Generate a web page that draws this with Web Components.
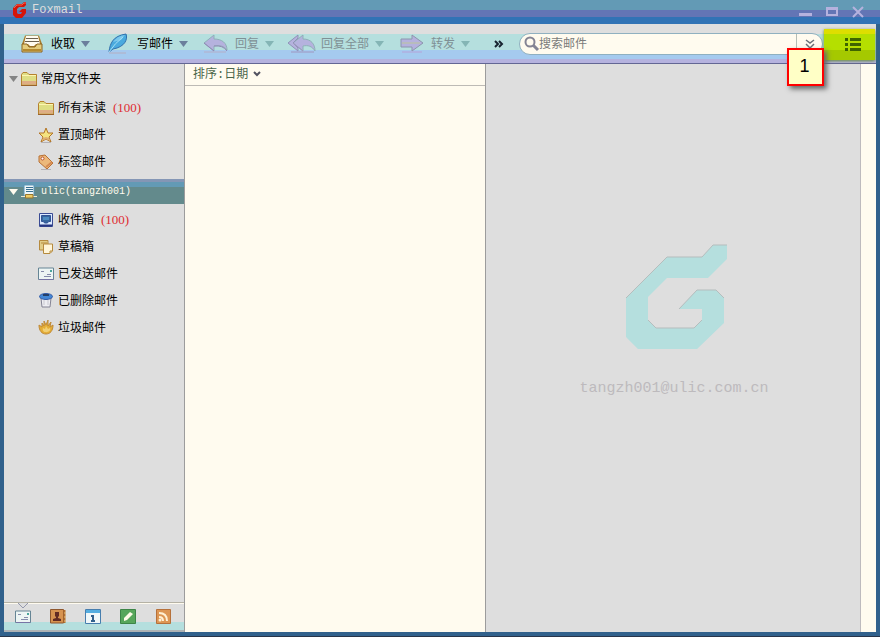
<!DOCTYPE html>
<html lang="zh-CN">
<head>
<meta charset="utf-8">
<title>Foxmail</title>
<style>
html,body{height:100%;margin:0}
body{font:12px/16px "Liberation Mono","Noto Sans CJK SC",monospace;color:#000;overflow:hidden}
</style>
</head>
<body>
<fox-window></fox-window>
<script>
const ICONS = {
fox:[16,16,'<path d="M1 6 5 2H10L12 0H14V3L12 5H7L5 7V11L6 12H9L10 10H7L10 7H14V11L10 16H4L1 13Z" fill="#d61408"/><path d="M2 6 5 3H10L12 1H14" fill="none" stroke="#f0604c"/>'],
inbox:[22,20,'<path d="M4 1.500H18L21 10V18H1V10Z" fill="#a87b2a"/><path d="M5 2H17L19 10H3Z" fill="#fffbef"/><path d="M5 4.500H17M4 7.500H18" stroke="#6b6050"/><path d="M1 10H6L8 13H14L16 10H21V18H1Z" fill="#e4cc7c" stroke="#8c6520"/><path d="M7 10H15L13 12H9Z" fill="#fffbef"/><path d="M2 16H20" stroke="#b58a30" stroke-width="2"/>'],
feather:[20,21,'<path d="M1 19C2 10 5 3 18 1C20 6 17 14 5 16Z" fill="#4aaade" stroke="#3170ad"/><path d="M5 9Q9 3 17 2L13 7Z" fill="#7bc8ec"/><path d="M1 19Q7 10 15 4" fill="none" stroke="#a5dff5"/><path d="M1 20H18" stroke="#b5aec0"/>'],
reply:[24,20,'<path d="M0 9 10 1V5C18 5 23 9 23 16C20 12 16 11 10 12V17Z" fill="#b5b2de" stroke="#8fb1b8"/><path d="M10 12Q19 11 23 17M0 9 10 17" fill="none" stroke="#9387b7"/><path d="M0 18H22" stroke="#b5aec8"/>'],
replyall:[28,20,'<path d="M5 9 15 1V5C23 5 27 10 27 17C24 12 20 11 15 12V17Z" fill="#b5b2de" stroke="#8fb1b8"/><path d="M0 9 10 1V4L5 9 10 14V17Z" fill="#b5b2de" stroke="#8f93b7"/><path d="M5 9 15 17M3 18H26" fill="none" stroke="#9f96c0"/>'],
forward:[24,20,'<path d="M1 5H12V1L23 9 12 17V13H1Z" fill="#b5b2de" stroke="#8c96ad"/><path d="M2 9H20" stroke="#b8bcbc" stroke-width="2"/><path d="M2 18H22" stroke="#b5a2d8"/>'],
caret:[9,6,'<path d="M0 0H9L4.500 6Z" fill="currentColor"/>'],
search:[15,15,'<circle cx="6" cy="6" r="4.500" fill="none" stroke="#848494" stroke-width="2"/><path d="M9 9 14 14" stroke="#848494" stroke-width="3"/>'],
more:[10,8,'<path d="M1 1 4 4 1 7M5 1 8 4 5 7" fill="none" stroke="#182430" stroke-width="2"/>'],
down2:[10,10,'<path d="M1 1 5 4 9 1M1 5 5 9 9 5" fill="none" stroke="#6b7078" stroke-width="1.500"/>'],
chev:[8,6,'<path d="M1 1 4 4 7 1" fill="none" stroke="#525260" stroke-width="2"/>'],
list:[17,14,'<path d="M0 1.500H3M5 1.500H16M0 6.500H3M5 6.500H16M0 11.500H3M5 11.500H16" stroke="#3e6500" stroke-width="3"/>'],
folder:[16,14,'<path d="M.5 2.500V13H15.500V2.500H8L6 .5H2Z" fill="#dede84" stroke="#b5822e"/><path d="M1 3.500H15" stroke="#fff5b0"/><path d="M1 9H15V12.500H1Z" fill="#dead84"/><path d="M0 13.500H16" stroke="#9b632b"/>'],
star:[16,16,'<path d="M8 1 10 6H15L11 10 13 15 8 12 3 15 5 10 1 6H6Z" fill="#f4e37f" stroke="#b37526"/><path d="M5 11 8 10 11 11 12 14 8 12 4 14Z" fill="#dead73"/><path d="M3 15.500H13" stroke="#b5b2b5"/>'],
tag:[16,16,'<path d="M1 2 7 1 15 9 9 15 1 8Z" fill="#ecb87a" stroke="#b87135"/><circle cx="4.500" cy="4.500" r="1.500" fill="#fff" stroke="#b84f2c"/><path d="M8 13 14 8" stroke="#d58a52" stroke-width="2"/><path d="M3 15.500H13" stroke="#b5b2b5"/>'],
account:[16,14,'<path d="M3 0H13V11H3Z" fill="#eef6f8" stroke="#5b93b5"/><path d="M5 2.500H12M5 4.500H12M5 6.500H12" stroke="#397092"/><path d="M0 11.500H16" stroke="#f1ead3"/><path d="M4.500 9.500H12V13H4.500Z" fill="#edcb66" stroke="#98752c"/>'],
received:[14,14,'<path d="M.5.500H13.500V13.500H.500Z" fill="#dceaff" stroke="#3a4b93"/><path d="M2.500 2.500H11.500V8.500H9.500L8.500 10H5.500L4.500 8.500H2.500Z" fill="#37669d" stroke="#315395"/><path d="M4 4H10V7H4Z" fill="#4d8bc0"/><path d="M1 12.500H13" stroke="#273682" stroke-width="2"/>'],
drafts:[14,14,'<path d="M.5.500H9V10H.500Z" fill="#e1cc86" stroke="#b58a3e"/><path d="M4.500 4H13.500V11L11 13.500H4.500Z" fill="#fff5d8" stroke="#b58a3e"/><path d="M13 11H11V13M2 3H8" fill="none" stroke="#b58a3e"/>'],
mail:[16,14,'<path d="M.5 1H15.500V12.500H.500Z" fill="#edf5f4" stroke="#668595"/><path d="M3 4.500H6M9 7.500H13M6 9.500H13" stroke="#858cab"/><path d="M12 3H14V5H12Z" fill="#4aa49b"/><path d="M1 12.500H15.500" stroke="#7775a5"/>'],
bin:[14,15,'<path d="M2 5H12L11 14H3Z" fill="#eeeef2" stroke="#848494"/><path d="M5 7V12M9 7V12" stroke="#c8c8d0"/><ellipse cx="7" cy="3.500" rx="6.500" ry="3" fill="#4387d5" stroke="#315aa8"/><path d="M4 2H10" stroke="#263f68" stroke-width="2"/>'],
fire:[14,15,'<path d="M3 3 5 6V1L7 5 9 0V6L12 2 11 7 14 5C14 11 11 14 7 14S0 11 0 5L3 7Z" fill="#e4ad35" stroke="#c08a38"/><path d="M4 8 6 9 7 6 9 9 11 8C13 13 2 14 4 8Z" fill="#f1cf74"/>'],
contacts:[16,15,'<path d="M.5.500H13.500V14H.500Z" fill="#d79350" stroke="#8e572e"/><path d="M14.500 1V14" stroke="#b46f2e" stroke-width="2"/><path d="M5 3H9V7L8 8V9L11 10V12H3V10L6 9V8L5 7Z" fill="#632c23"/><path d="M14 4H16M14 8H16M14 12H16" stroke="#e4c280"/>'],
calendar:[16,15,'<path d="M.5.500H15.500V14.500H.500Z" fill="#eff7f9" stroke="#477eae"/><path d="M1 1H15V4H1Z" fill="#53ade0"/><path d="M6 7H8V12M6 12H10" fill="none" stroke="#31608c" stroke-width="2"/>'],
note:[16,15,'<path d="M.5.500H15.500V14.500H.500Z" fill="#57a65b" stroke="#3d8547"/><path d="M4 9 10 3 13 5 7 11 4 12Z" fill="#fffbe8"/>'],
rss:[15,15,'<path d="M.5.500H14.500V14.500H.500Z" fill="#dd9654" stroke="#b6713b"/><path d="M3 4Q11 4 11 12M3 8Q7 8 7 12" fill="none" stroke="#fff1d4" stroke-width="2"/><circle cx="4" cy="11" r="1.500" fill="#fff1d4"/>'],
min:[13,10,'<path d="M0 7.500H13" stroke="#b5b2de" stroke-width="3"/>'],
max:[12,10,'<path d="M1 1.500H11V8H1Z" fill="none" stroke="#b5b2de" stroke-width="2"/><path d="M0 1.500H12" stroke="#b5b2de" stroke-width="3"/>'],
close:[12,12,'<path d="M1 1 11 11M11 1 1 11" stroke="#b5b2de" stroke-width="2"/>'],
notch:[12,7,'<path d="M1 0 6 5 11 0" fill="#dedede" stroke="#9498ad"/>'],
logo:[102,106,'<path d="M0 54 41 13H76L87 1H101V15L82 34H41L22 53V76L30 84H68L76 76V65H53L71 46H90L98 54V79L71 105H12L0 93Z" fill="#b5dfde"/><path d="M0 54 41 13H76L87 1H101M53 65 71 46H90L98 54M22 76 30 84H68L76 76" fill="none" stroke="#b5bdbd"/>']
};
const BTN='button{appearance:none;border:0;padding:0;margin:0;background:none;font:inherit;color:inherit;text-align:left}button:focus-visible{outline:1px dotted #31608c}';
function define(name, css, html){
  const t=document.createElement('template');
  t.innerHTML=`<style>*{box-sizing:border-box}${BTN}${css}</style>${html}`;
  customElements.define(name,class extends HTMLElement{
    constructor(){super();this.attachShadow({mode:'open'}).append(t.content.cloneNode(true));}
  });
}
/* Elements whose markup depends on their attributes render once, when connected. */
function defineDynamic(name, render){
  customElements.define(name,class extends HTMLElement{
    connectedCallback(){
      if(this.shadowRoot)return;
      this.attachShadow({mode:'open'}).innerHTML=`<style>*{box-sizing:border-box}${BTN}</style>${render(this)}`;
    }
  });
}
defineDynamic('fox-icon',h=>{
  const [w,y,p]=ICONS[h.getAttribute('name')];
  return `<style>:host{display:inline-flex;flex:none;align-items:center;justify-content:center}svg{display:block;flex:none;overflow:visible}</style><svg aria-hidden="true" width="${w}" height="${y}" viewBox="0 0 ${w} ${y}">${p}</svg>`;
});
defineDynamic('fox-tool',h=>`<style>:host{display:block;flex:none;--caret:#6b7f9c}:host([off]){color:#7f9095;--caret:#84b5b5}
button{display:flex;align-items:center;white-space:nowrap}.i{width:24px;margin-right:7px}.c{color:var(--caret);margin-left:6px}.t{padding-top:2px}</style>
<button><fox-icon class="i" name="${h.getAttribute('icon')}"></fox-icon><span class="t"><slot></slot></span><fox-icon class="c" name="caret"></fox-icon></button>`);
defineDynamic('fox-row',h=>`<style>
:host{display:block}button{display:flex;width:100%;height:27px;align-items:center;padding-left:34px;white-space:nowrap}
:host([group]) button{height:30px;padding-left:5px}
:host([selected]) button{height:25px;color:#fffbef;background:linear-gradient(#8496b5 0 3px,#639ab5 3px 8px,#638a8c 8px)}
.c{color:#848484;margin-right:3px}:host([selected]) .c{color:#fffbef}
.i{width:16px;margin-right:4px}.t{padding-top:2px}
.n{font:13px/16px "Liberation Serif",serif;color:#de2c31;margin-left:7px}:host([selected]) .t{font-size:10px;padding:0}</style>
<button>${h.hasAttribute('group')?'<fox-icon class="c" name="caret"></fox-icon>':''}<fox-icon class="i" name="${h.getAttribute('icon')}"></fox-icon><span class="t"><slot></slot></span>${h.hasAttribute('count')?`<span class="n">(${h.getAttribute('count')})</span>`:''}</button>`);
define('fox-title',`:host{display:flex;flex:none;height:24px;padding:0 16px 4px 12px;align-items:center;gap:4px;color:#dedede;background:linear-gradient(#639ab5 0 10px,#6375b5 10px 17px,#3173b5 17px)}
nav{display:flex;gap:14px;margin-left:auto;align-items:center;padding-top:4px}button{display:flex;align-items:center;height:16px}`,
`<fox-icon name="fox"></fox-icon><span>Foxmail</span><nav><button aria-label="最小化"><fox-icon name="min"></fox-icon></button><button aria-label="最大化"><fox-icon name="max"></fox-icon></button><button aria-label="关闭"><fox-icon name="close"></fox-icon></button></nav>`);
define('fox-search',`:host{display:flex;flex:1;min-width:0;height:22px;border:1px solid #8fb0c0;border-radius:11px;background:#fffbef;overflow:hidden;align-items:center}
label{display:flex;flex:1;align-items:center;padding-left:4px;min-width:0}
input{flex:1;min-width:0;border:0;outline:0;padding:2px 0 0;background:none;font:inherit;color:#000}input::placeholder{color:#7b7b7b;opacity:1}
button{width:26px;height:20px;border-left:1px solid #b5bdb5;display:flex;align-items:center;justify-content:center}`,
`<label><fox-icon name="search"></fox-icon><input aria-label="搜索邮件" placeholder="搜索邮件"></label><button aria-label="搜索选项"><fox-icon name="down2"></fox-icon></button>`);
define('fox-toolbar',`:host{display:flex;flex:none;position:relative;height:40px;align-items:center;padding:0 1px 0 16px;gap:16px;border-bottom:1px solid #636694;background:linear-gradient(#dedede 0 10px,#b5dfde 10px 26px,#a5caef 26px 35px,#b5b2de 35px)}
.more{display:flex;margin:0 -1px 0 8px}.view{width:51px;height:31px;margin:2px 0 0 -15px;display:flex;align-items:center;justify-content:center;padding-left:8px;background:linear-gradient(#dede00 0 5px,#b5df00 5px 21px,#a5c900 21px);box-shadow:0 1px 3px #638a31}
.tip{position:absolute;right:52px;top:24px;width:37px;height:38px;border:2px solid #f00;background:#ffffc6;box-shadow:3px 3px 5px #666;font:18px/32px "Liberation Sans",sans-serif;text-align:center;padding-right:2px;z-index:2}`,
`<fox-tool icon="inbox">收取</fox-tool><fox-tool icon="feather">写邮件</fox-tool><fox-tool icon="reply" off>回复</fox-tool><fox-tool icon="replyall" off>回复全部</fox-tool><fox-tool icon="forward" off>转发</fox-tool><button class="more" aria-label="更多"><fox-icon name="more"></fox-icon></button><fox-search></fox-search><button class="view" aria-label="菜单"><fox-icon name="list"></fox-icon></button><span class="tip">1</span>`);
define('fox-sidebar',`:host{display:flex;flex-direction:column;flex:none;width:181px;background:#dedede;border-right:1px solid #9c9c9c}
.set{padding-bottom:4px}.set+fox-row+.set{padding-top:2px}
footer{position:relative;margin-top:auto;height:30px;display:flex;align-items:center;padding-left:10px;gap:17px;border-top:1px solid #b5b2a5;border-bottom:2px solid #adb2b5;background:linear-gradient(#fffbef 0 1px,#dedede 1px 19px,#b5dfde 19px)}
footer button{width:18px;height:18px;display:flex;align-items:center;justify-content:center}.notch{position:absolute;left:13px;top:0}`,
`<div class="set"><fox-row group icon="folder">常用文件夹</fox-row><fox-row icon="folder" count="100">所有未读</fox-row><fox-row icon="star">置顶邮件</fox-row><fox-row icon="tag">标签邮件</fox-row></div>
<fox-row group selected icon="account">ulic(tangzh001)</fox-row>
<div class="set"><fox-row icon="received" count="100">收件箱</fox-row><fox-row icon="drafts">草稿箱</fox-row><fox-row icon="mail">已发送邮件</fox-row><fox-row icon="bin">已删除邮件</fox-row><fox-row icon="fire">垃圾邮件</fox-row></div>
<footer><fox-icon class="notch" name="notch"></fox-icon><button aria-label="邮件"><fox-icon name="mail"></fox-icon></button><button aria-label="联系人"><fox-icon name="contacts"></fox-icon></button><button aria-label="日历"><fox-icon name="calendar"></fox-icon></button><button aria-label="便签"><fox-icon name="note"></fox-icon></button><button aria-label="订阅"><fox-icon name="rss"></fox-icon></button></footer>`);
define('fox-list',`:host{display:block;flex:none;width:301px;background:#fffbef;border-right:1px solid #9c9c9c}
header{height:22px;padding-left:8px;border-bottom:1px solid #bdbab5;color:#4a654a}button{display:flex;height:20px;align-items:center;gap:5px}span{padding-top:2px}`,
`<header><button><span>排序:日期</span><fox-icon name="chev"></fox-icon></button></header>`);
define('fox-preview',`:host{display:flex;flex:1;min-width:0;background:#fffbef;padding-right:15px}
div{flex:1;min-width:0;background:#dedede;border-right:1px solid #bdbabd;display:flex;flex-direction:column;align-items:center;justify-content:center;gap:29px;padding:0 0 54px 2px}
span{font-size:15px;line-height:20px;color:#bdbabd}.g{padding-left:6px}`,
`<div><fox-icon class="g" name="logo"></fox-icon><span>tangzh001@ulic.com.cn</span></div>`);
define('fox-window',`:host{box-sizing:border-box;display:flex;flex-direction:column;height:100vh;background:#31618c;border-bottom:1px solid #28354a}
main{flex:1;min-height:0;display:flex;flex-direction:column;margin:0 4px 4px}section{flex:1;min-height:0;display:flex}`,
`<fox-title></fox-title><main><fox-toolbar></fox-toolbar><section><fox-sidebar></fox-sidebar><fox-list></fox-list><fox-preview></fox-preview></section></main>`);
</script>
</body>
</html>
